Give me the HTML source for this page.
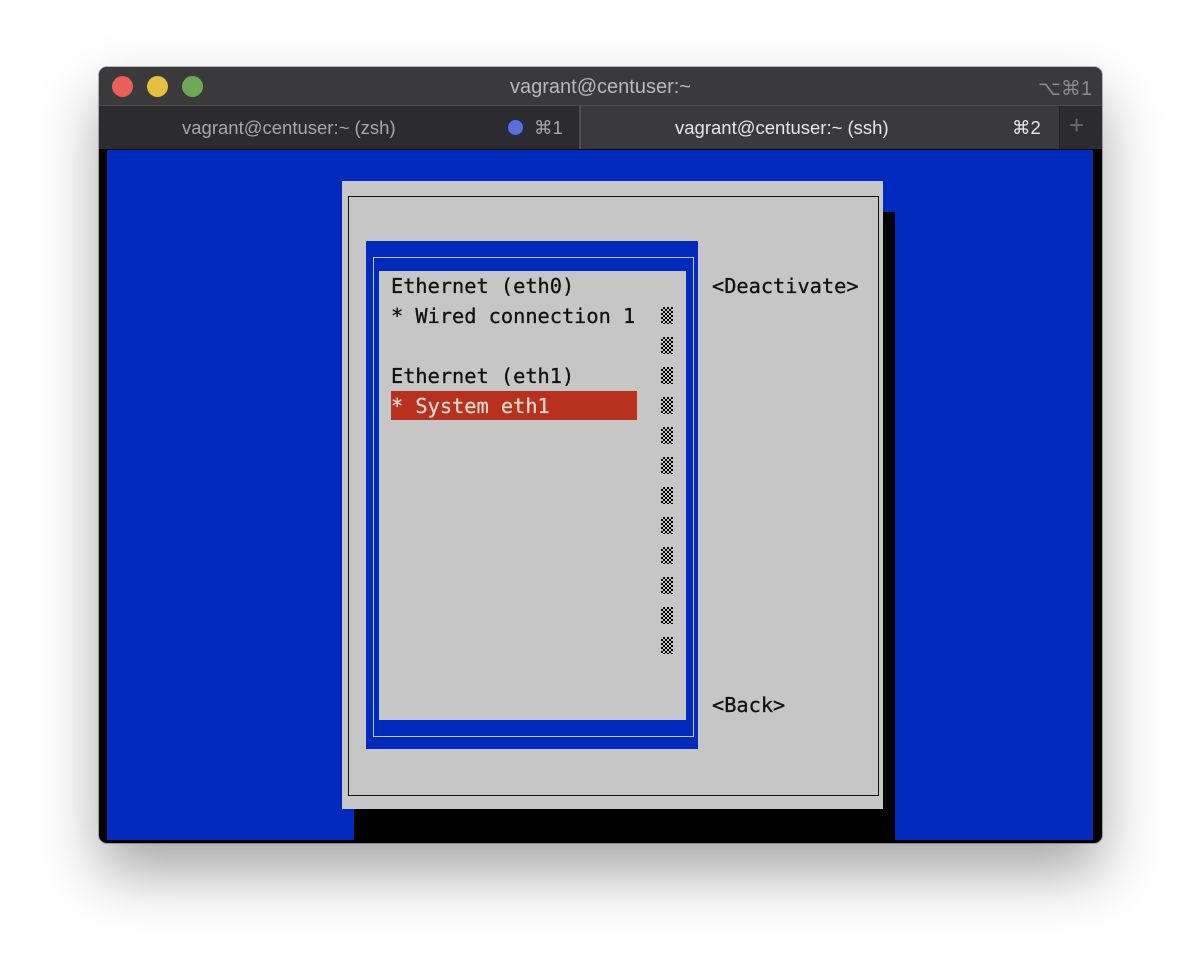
<!DOCTYPE html>
<html><head><meta charset="utf-8"><style>
*{margin:0;padding:0;box-sizing:border-box}
body{width:1200px;height:973px;background:#fff;position:relative;overflow:hidden;font-family:"Liberation Sans",sans-serif}
.abs{position:absolute}
.win{left:99px;top:67px;width:1003px;height:776px;border-radius:8px;background:#000;box-shadow:0 30px 60px rgba(0,0,0,.35),0 0 0 1px rgba(0,0,0,.25);overflow:hidden}
.title{left:0;top:0;width:1003px;height:39px;background:#3a3a3c;border-bottom:1px solid #4c4c4e}
.dot{width:21px;height:21px;border-radius:50%;top:9px}
.tabs{left:0;top:39px;width:1003px;height:43px;background:#2c2c2e}
.mono{font-family:"DejaVu Sans Mono","Liberation Mono",monospace;font-size:20.3px;color:#111;white-space:pre;line-height:30px;-webkit-text-stroke:0.3px #111}
.chk{width:12px;height:17px;background-color:#c6c6c6;background-image:linear-gradient(45deg,#000 25%,transparent 25%,transparent 75%,#000 75%),linear-gradient(45deg,#000 25%,transparent 25%,transparent 75%,#000 75%);background-size:4px 4px;background-position:0 0,2px 2px;left:661px}
</style></head><body>
<div class="abs win">
  <div class="abs title">
    <div class="abs dot" style="left:13px;background:#ec5f57"></div>
    <div class="abs dot" style="left:48px;background:#e6bf3e"></div>
    <div class="abs dot" style="left:83px;background:#6aaa55"></div>
    <div class="abs" style="left:0;width:1003px;top:9px;text-align:center;color:#b8b8b8;font-size:20px">vagrant@centuser:~</div>
    <div class="abs" style="right:10px;top:9px;color:#8a8a8a;font-size:20px">⌥⌘1</div>
  </div>
  <div class="abs tabs">
    <div class="abs" style="left:83px;top:11px;color:#a8a8a8;font-size:18.5px">vagrant@centuser:~ (zsh)</div>
    <div class="abs" style="left:408px;top:13px;width:17px;height:17px;border-radius:50%;background:#5870d8;border:1px solid #1a2a6a"></div>
    <div class="abs" style="left:435px;top:11px;color:#a8a8a8;font-size:18.5px">⌘1</div>
    <div class="abs" style="left:480px;top:0;width:481px;height:43px;background:#3a3a3d;border-left:2px solid #505052;border-right:1px solid #222"></div>
    <div class="abs" style="left:576px;top:11px;color:#e8e8e8;font-size:18.5px">vagrant@centuser:~ (ssh)</div>
    <div class="abs" style="left:913px;top:11px;color:#e8e8e8;font-size:18.5px">⌘2</div>
    <div class="abs" style="left:970px;top:4px;color:#6a6a6a;font-size:26px;font-weight:100">+</div>
  </div>
  <div class="abs" style="left:8px;top:83px;width:986px;height:690px;background:#0029bd"></div>
</div>
<div class="abs" style="left:354px;top:212px;width:541px;height:628px;background:#000"></div>
<div class="abs" style="left:342px;top:181px;width:541px;height:628px;background:#c6c6c6"></div>
<div class="abs" style="left:348px;top:196px;width:531px;height:600px;border:1px solid #111"></div>
<div class="abs" style="left:366px;top:241px;width:332px;height:508px;background:#0029bd"></div>
<div class="abs" style="left:373px;top:257px;width:321px;height:480px;border:1px solid #c6c6c6"></div>
<div class="abs" style="left:379px;top:271px;width:307px;height:449px;background:#c6c6c6"></div>
<div class="abs" style="left:391px;top:391px;width:246px;height:29px;background:#b7311c"></div>
<div class="abs mono" style="left:391px;top:271px">Ethernet (eth0)
* Wired connection 1

Ethernet (eth1)
<span style="color:#e0d6d0;-webkit-text-stroke:0.3px #e0d6d0">* System eth1</span></div>
<div class="abs mono" style="left:712px;top:271px">&lt;Deactivate&gt;</div>
<div class="abs mono" style="left:712px;top:690px">&lt;Back&gt;</div>
<div class="abs chk" style="top:307px"></div>
<div class="abs chk" style="top:337px"></div>
<div class="abs chk" style="top:367px"></div>
<div class="abs chk" style="top:397px"></div>
<div class="abs chk" style="top:427px"></div>
<div class="abs chk" style="top:457px"></div>
<div class="abs chk" style="top:487px"></div>
<div class="abs chk" style="top:517px"></div>
<div class="abs chk" style="top:547px"></div>
<div class="abs chk" style="top:577px"></div>
<div class="abs chk" style="top:607px"></div>
<div class="abs chk" style="top:637px"></div>
</body></html>
